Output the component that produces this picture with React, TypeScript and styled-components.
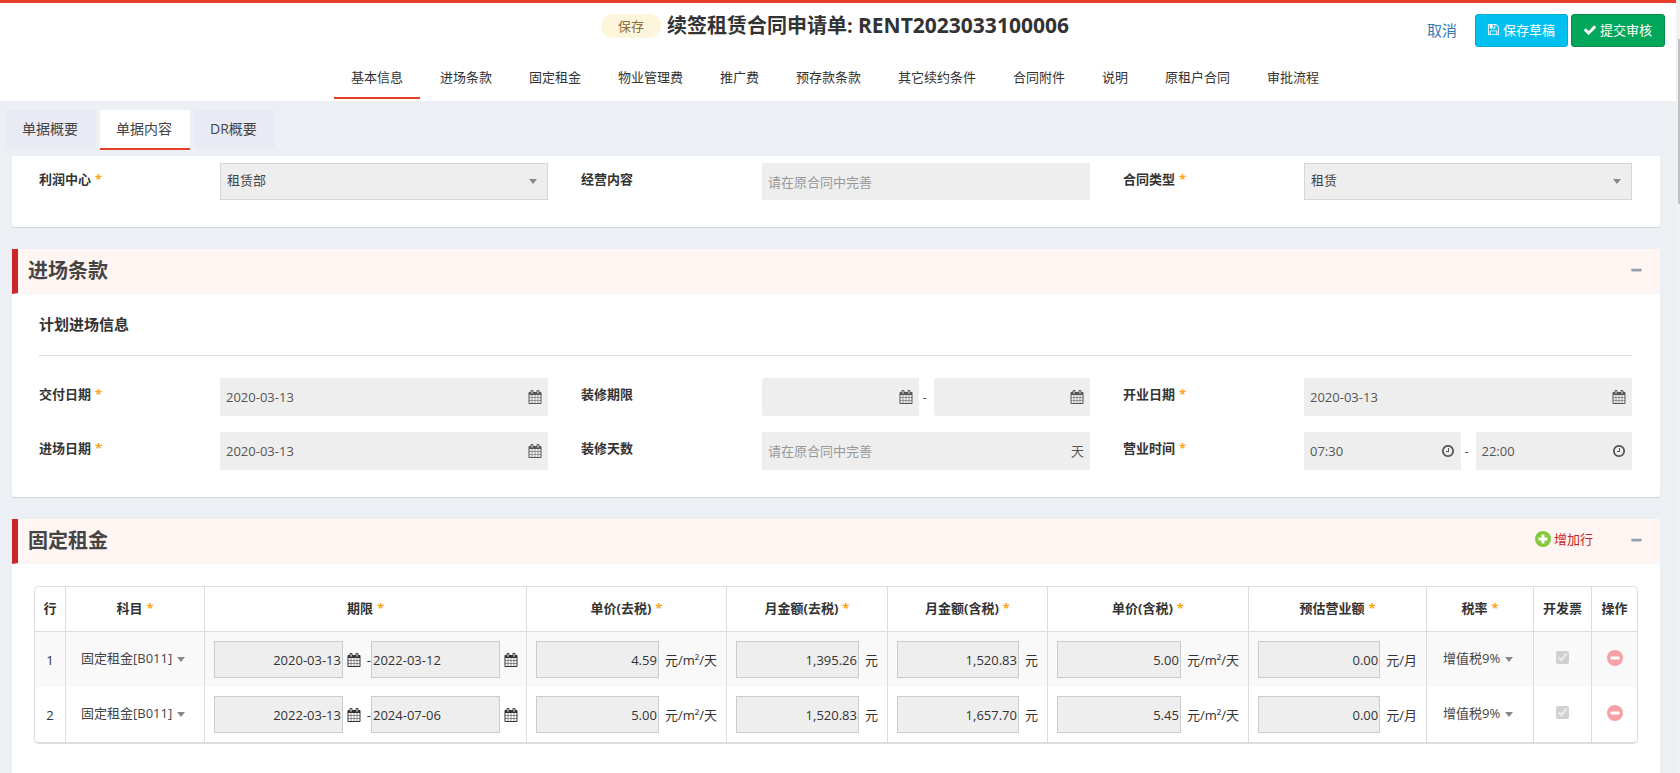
import React from "react";
import styled, { createGlobalStyle, css } from "styled-components";

const FONT = '"Open Sans", "Noto Sans CJK SC", sans-serif';

const GlobalStyle = createGlobalStyle`
  *, *::before, *::after { box-sizing: border-box; }
  html, body { margin: 0; height: 100%; overflow: hidden; }
  body, button, input, select { font-family: ${FONT}; font-size: 13px; }
  body { background: #ecf0f5; color: #333; line-height: 20px; }
`;

/* ---------- icons ---------- */

const ICONS = {
  save: "M512 1536h768v-384h-768v384zm896 0h128v-896q0-14-10-38.5t-20-34.5l-281-281q-10-10-34-20t-39-10v416q0 40-28 68t-68 28h-576q-40 0-68-28t-28-68v-416h-128v1280h128v-416q0-40 28-68t68-28h832q40 0 68 28t28 68v416zm-384-928v-320q0-13-9.5-22.5t-22.5-9.5h-192q-13 0-22.5 9.5t-9.5 22.5v320q0 13 9.5 22.5t22.5 9.5h192q13 0 22.5-9.5t9.5-22.5zm640 32v928q0 40-28 68t-68 28h-1344q-40 0-68-28t-28-68v-1344q0-40 28-68t68-28h928q40 0 88 20t76 48l280 280q28 28 48 76t20 88z",
  check:
    "M1671 566q0 40-28 68l-724 724-136 136q-28 28-68 28t-68-28l-136-136-362-362q-28-28-28-68t28-68l136-136q28-28 68-28t68 28l294 295 656-657q28-28 68-28t68 28l136 136q28 28 28 68z",
  calendar:
    "M192 1664h288v-288h-288v288zm352 0h320v-288h-320v288zm-352-352h288v-320h-288v320zm352 0h320v-320h-320v320zm-352-384h288v-288h-288v288zm736 736h320v-288h-320v288zm-384-736h320v-288h-320v288zm768 736h288v-288h-288v288zm-384-352h320v-320h-320v320zm-352-864v-288q0-13-9.5-22.5t-22.5-9.5h-64q-13 0-22.5 9.5t-9.5 22.5v288q0 13 9.5 22.5t22.5 9.5h64q13 0 22.5-9.5t9.5-22.5zm736 864h288v-320h-288v320zm-384-384h320v-288h-320v288zm384 0h288v-288h-288v288zm32-480v-288q0-13-9.5-22.5t-22.5-9.5h-64q-13 0-22.5 9.5t-9.5 22.5v288q0 13 9.5 22.5t22.5 9.5h64q13 0 22.5-9.5t9.5-22.5zm384-64v1280q0 52-38 90t-90 38h-1408q-52 0-90-38t-38-90v-1280q0-52 38-90t90-38h128v-96q0-66 47-113t113-47h64q66 0 113 47t47 113v96h384v-96q0-66 47-113t113-47h64q66 0 113 47t47 113v96h128q52 0 90 38t38 90z",
  clock:
    "M1024 544v448q0 14-9 23t-23 9h-320q-14 0-23-9t-9-23v-64q0-14 9-23t23-9h224v-352q0-14 9-23t23-9h64q14 0 23 9t9 23zm416 352q0-148-73-273t-198-198-273-73-273 73-198 198-73 273 73 273 198 198 273 73 273-73 198-198 73-273zm224 0q0 209-103 385.5t-279.5 279.5-385.5 103-385.5-103-279.5-279.5-103-385.5 103-385.5 279.5-279.5 385.5-103 385.5 103 279.5 279.5 103 385.5z",
  minus:
    "M1600 736v192q0 40-28 68t-68 28h-1216q-40 0-68-28t-28-68v-192q0-40 28-68t68-28h1216q40 0 68 28t28 68z",
};

const IconSvg = styled.svg`
  display: block;
  flex: none;
  fill: currentColor;
`;

function Icon({ name, size = 14 }: { name: keyof typeof ICONS; size?: number }) {
  return (
    <IconSvg width={size} height={size} viewBox="0 0 1792 1792" aria-hidden="true">
      <path d={ICONS[name]} />
    </IconSvg>
  );
}

function AddIcon() {
  return (
    <IconSvg width="16" height="16" viewBox="0 0 16 16" aria-hidden="true">
      <circle cx="8" cy="8" r="8" fill="#83c93d" />
      <path d="M6.5 3.5h3v3h3v3h-3v3h-3v-3h-3v-3h3z" fill="#fff" />
    </IconSvg>
  );
}

function RemoveIcon() {
  return (
    <IconSvg width="16" height="16" viewBox="0 0 16 16" aria-hidden="true">
      <circle cx="8" cy="8" r="8" fill="#f5a1a5" />
      <rect x="3.5" y="6.5" width="9" height="3" rx="0.5" fill="#fff" />
    </IconSvg>
  );
}

/* ---------- page frame ---------- */

const Page = styled.div`
  display: flex;
  height: 100vh;
  overflow: hidden;
`;

const Content = styled.div`
  flex: 1;
  min-width: 0;
`;

const ScrollRail = styled.div`
  flex: none;
  width: 4px;
  padding: 39px 0 0 2px;
  background: #f1f1f1;
`;

const ScrollThumb = styled.div`
  height: 165px;
  background: #c1c1c1;
`;

const Header = styled.header`
  border-top: 3px solid #e73c27;
  padding-bottom: 2px;
  background: #fff;
`;

const TitleBar = styled.div`
  display: grid;
  grid-template-columns: 1fr auto 1fr;
  align-items: start;
  height: 56px;
`;

const TitleGroup = styled.div`
  grid-column: 2;
  display: flex;
  align-items: center;
  gap: 6px;
  padding: 8px 6px 0 0;
`;

const StatusBadge = styled.span`
  padding: 2px 17px;
  border-radius: 12px;
  background: #fdf6dd;
  color: #8a6d3b;
`;

const DocTitle = styled.h1`
  margin: 0;
  font-size: 20px;
  line-height: 28px;
  color: #333;
`;

const DocNumber = styled.span`
  font-size: 21px;
`;

const Actions = styled.div`
  display: flex;
  align-items: center;
  justify-content: flex-end;
  gap: 3px;
  padding: 11px 11px 0 0;
`;

const CancelLink = styled.a`
  margin-right: 15px;
  padding-bottom: 2px;
  font-size: 15px;
  color: #337ab7;
  text-decoration: none;
`;

const ActionButton = styled.button<{ $tone: "info" | "success" }>`
  display: flex;
  align-items: center;
  gap: 3px;
  height: 33px;
  padding: 0 12px 2px 11px;
  border: 1px solid ${(p) => (p.$tone === "info" ? "#00acd6" : "#008d4c")};
  border-radius: 3px;
  background: ${(p) => (p.$tone === "info" ? "#00c0ef" : "#00a65a")};
  color: #fff;
`;

const SectionNav = styled.nav`
  display: flex;
  justify-content: center;
  gap: 3px;
  padding-right: 6px;
`;

const NavLink = styled.a<{ $active: boolean }>`
  padding: 8px 17px 10px;
  border-bottom: 2px solid ${(p) => (p.$active ? "#e73c27" : "transparent")};
  color: #333;
  text-decoration: none;
  white-space: nowrap;
`;

const Main = styled.main`
  padding: 9px 16px 0 12px;
`;

const DocTabs = styled.div`
  display: flex;
  align-items: flex-start;
  gap: 4px;
  height: 40px;
  margin: 0 0 6px -6px;
`;

const DocTab = styled.button<{ $active: boolean }>`
  height: 38px;
  padding: 0 18px 0 16px;
  border: 0;
  background: #eaeaf4;
  color: #444;
  font-size: 14px;
  line-height: 20px;
  ${(p) =>
    p.$active &&
    css`
      height: 40px;
      border-bottom: 2px solid #e73c27;
      background: #fff;
    `}
`;

/* ---------- cards ---------- */

const Card = styled.section`
  margin-bottom: 22px;
  border-radius: 0 0 3px 3px;
  background: #fff;
  box-shadow: 0 1px 1px rgba(0, 0, 0, 0.12);
`;

const CardHeader = styled.div`
  display: flex;
  align-items: center;
  height: 45px;
  padding: 0 17px 1px 10px;
  border-left: 6px solid #c9282b;
  border-bottom: 1px solid #f4f4f4;
  background: #fff5f3;
`;

const CardTitle = styled.h2`
  margin: 0 auto 0 0;
  font-size: 20px;
  line-height: 28px;
  color: #444;
`;

const AddRowButton = styled.button`
  display: flex;
  align-items: center;
  gap: 3px;
  margin-right: 37px;
  padding: 0 0 4px;
  border: 0;
  background: none;
  color: #c4251e;
`;

const CollapseButton = styled.button`
  padding: 0;
  border: 0;
  background: none;
  color: #97a0b3;
`;

const FormBody = styled.div<{ $top: number }>`
  padding: ${(p) => p.$top}px 28px 27px 27px;
`;

const SubHeading = styled.h3`
  margin: 0 0 22px;
  padding-bottom: 21px;
  border-bottom: 1px solid #ddd;
  font-size: 15px;
  line-height: 20px;
`;

const FieldGrid = styled.div`
  display: grid;
  grid-template-columns: repeat(3, minmax(0, 1fr));
  gap: 16px 33px;
`;

const FieldRow = styled.div`
  display: flex;
  align-items: flex-start;
`;

const FieldLabel = styled.label`
  flex: none;
  width: 181px;
  padding-top: 6px;
  font-weight: 700;
`;

const Star = styled.span`
  margin-left: 4px;
  color: #ffa31a;
  font-weight: 700;
`;

const RangeBox = styled.div`
  display: flex;
  flex: 1;
  min-width: 0;
  align-items: center;
`;

const Dash = styled.span`
  flex: none;
  width: 15px;
  padding-left: 4px;
  color: #555;
`;

const InputShell = styled.div<{ $height?: number; $rounded?: boolean }>`
  display: flex;
  flex: 1;
  min-width: 0;
  align-items: center;
  height: ${(p) => p.$height ?? 38}px;
  padding: 0 6px;
  border-radius: ${(p) => (p.$rounded ? "3px 0 0 3px" : "0")};
  background: #eee;
  color: #555;
`;

const TextInput = styled.input`
  flex: 1;
  min-width: 0;
  height: 100%;
  padding: 0;
  border: 0;
  background: none;
  color: #555;
  &::placeholder {
    color: #999;
    opacity: 1;
  }
`;

const SelectBox = styled.div`
  display: grid;
  flex: 1;
  min-width: 0;
  align-items: center;
`;

const SelectInput = styled.select`
  grid-area: 1 / 1;
  width: 100%;
  height: 37px;
  padding: 0 24px 3px 6px;
  border: 1px solid #d2d6de;
  border-radius: 0;
  appearance: none;
  background: #eee;
  color: #444;
  &:disabled {
    opacity: 1;
  }
`;

const Caret = styled.span<{ $inset?: number }>`
  grid-area: 1 / 1;
  justify-self: end;
  margin-right: ${(p) => p.$inset ?? 0}px;
  border: 4px solid transparent;
  border-top: 5px solid #888;
  border-bottom: 0;
  pointer-events: none;
`;

/* ---------- rent table ---------- */

const TableBody = styled.div`
  padding: 22px 22px 60px;
`;

const RentTable = styled.table`
  width: 100%;
  table-layout: fixed;
  border: 1px solid #ddd;
  border-bottom-width: 2px;
  border-radius: 5px;
  border-spacing: 0;
  border-collapse: separate;
  overflow: hidden;
`;

const Th = styled.th`
  height: 45px;
  padding: 0 0 2px;
  border-bottom: 1px solid #ddd;
  & + & {
    border-left: 1px solid #ddd;
  }
`;

const Td = styled.td`
  height: 55px;
  padding: 0;
  text-align: center;
  & + & {
    border-left: 1px solid #ddd;
  }
`;

const BodyRow = styled.tr`
  &:nth-child(odd) {
    background: #f9f9f9;
  }
`;

const CellFlow = styled.div`
  display: flex;
  align-items: center;
  gap: 6px;
  padding: 0 9px;
`;

const DateFlow = styled(CellFlow)`
  gap: 0;
  padding-right: 4px;
`;

const IconSlot = styled.span`
  display: flex;
  padding: 0 4px;
`;

const DateDash = styled.span`
  width: 6px;
  text-align: right;
`;

const CellInput = styled.input<{ $align?: "left" | "right" }>`
  flex: 1;
  width: 0;
  min-width: 0;
  height: 37px;
  padding: 0 1px;
  border: 1px solid #ccc;
  background: #eee;
  color: #333;
  text-align: ${(p) => p.$align ?? "right"};
`;

const Unit = styled.span`
  flex: none;
  white-space: nowrap;
`;

const CellSelectBox = styled.div`
  display: inline-grid;
  align-items: center;
  margin-right: 4px;
`;

const CellSelect = styled.select`
  grid-area: 1 / 1;
  height: 24px;
  padding: 0 12px 0 0;
  border: 0;
  appearance: none;
  background: none;
  color: #444;
  &:disabled {
    opacity: 1;
  }
`;

const CellCaret = styled(Caret)`
  margin-top: 3px;
`;

const RaisedCell = styled.div`
  display: flex;
  justify-content: center;
  padding-bottom: 4px;
`;

const InvoiceCheck = styled.input`
  width: 13px;
  height: 13px;
  margin: 0;
`;

const RemoveButton = styled.button`
  padding: 0;
  border: 0;
  background: none;
`;

/* ---------- data ---------- */

const NAV = ["基本信息", "进场条款", "固定租金", "物业管理费", "推广费", "预存款条款", "其它续约条件", "合同附件", "说明", "原租户合同", "审批流程"];
const TABS = ["单据概要", "单据内容", "DR概要"];

const COLUMNS = [
  { title: "行", width: 30 },
  { title: "科目", width: 139, required: true },
  { title: "期限", width: 322, required: true },
  { title: "单价(去税)", width: 200, required: true },
  { title: "月金额(去税)", width: 161, required: true },
  { title: "月金额(含税)", width: 160, required: true },
  { title: "单价(含税)", width: 201, required: true },
  { title: "预估营业额", width: 178, required: true },
  { title: "税率", width: 107, required: true },
  { title: "开发票", width: 58 },
  { title: "操作", width: 46 },
];

const ROWS = [
  { from: "2020-03-13", to: "2022-03-12", amounts: ["4.59", "1,395.26", "1,520.83", "5.00", "0.00"] },
  { from: "2022-03-13", to: "2024-07-06", amounts: ["5.00", "1,520.83", "1,657.70", "5.45", "0.00"] },
];

const UNITS = ["元/m²/天", "元", "元", "元/m²/天", "元/月"];

/* ---------- composed parts ---------- */

function Label({ id, text, required }: { id: string; text: string; required?: boolean }) {
  return (
    <FieldLabel htmlFor={id}>
      {text}
      {required && <Star>*</Star>}
    </FieldLabel>
  );
}

function SelectField({ id, label, value }: { id: string; label: string; value: string }) {
  return (
    <FieldRow>
      <Label id={id} text={label} required />
      <SelectBox>
        <SelectInput id={id} disabled>
          <option>{value}</option>
        </SelectInput>
        <Caret $inset={11} />
      </SelectBox>
    </FieldRow>
  );
}

function DateField({ id, label, value }: { id: string; label: string; value: string }) {
  return (
    <FieldRow>
      <Label id={id} text={label} required />
      <InputShell>
        <TextInput id={id} defaultValue={value} readOnly />
        <Icon name="calendar" />
      </InputShell>
    </FieldRow>
  );
}

function RangeField(props: {
  id: string;
  label: string;
  required?: boolean;
  icon: "calendar" | "clock";
  values: [string, string];
  rounded?: boolean;
}) {
  const { id, label, required, icon, values, rounded } = props;
  return (
    <FieldRow>
      <Label id={id} text={label} required={required} />
      <RangeBox>
        <InputShell $rounded={rounded}>
          <TextInput id={id} defaultValue={values[0]} readOnly />
          <Icon name={icon} />
        </InputShell>
        <Dash>-</Dash>
        <InputShell $rounded={rounded}>
          <TextInput aria-label={`${label} 至`} defaultValue={values[1]} readOnly />
          <Icon name={icon} />
        </InputShell>
      </RangeBox>
    </FieldRow>
  );
}

function InlineSelect({ label, value }: { label: string; value: string }) {
  return (
    <RaisedCell>
      <CellSelectBox>
        <CellSelect aria-label={label} disabled>
          <option>{value}</option>
        </CellSelect>
        <CellCaret />
      </CellSelectBox>
    </RaisedCell>
  );
}

function CollapseToggle() {
  return (
    <CollapseButton type="button" aria-label="收起">
      <Icon name="minus" size={13} />
    </CollapseButton>
  );
}

export default function App() {
  return (
    <>
      <GlobalStyle />
      <Page>
        <Content>
          <Header>
            <TitleBar>
              <TitleGroup>
                <StatusBadge>保存</StatusBadge>
                <DocTitle>
                  续签租赁合同申请单: <DocNumber>RENT2023033100006</DocNumber>
                </DocTitle>
              </TitleGroup>
              <Actions>
                <CancelLink href="#">取消</CancelLink>
                <ActionButton type="button" $tone="info">
                  <Icon name="save" size={13} />
                  保存草稿
                </ActionButton>
                <ActionButton type="button" $tone="success">
                  <Icon name="check" />
                  提交审核
                </ActionButton>
              </Actions>
            </TitleBar>
            <SectionNav>
              {NAV.map((item, i) => (
                <NavLink key={item} href="#" $active={i === 0}>
                  {item}
                </NavLink>
              ))}
            </SectionNav>
          </Header>

          <Main>
            <DocTabs>
              {TABS.map((tab, i) => (
                <DocTab key={tab} type="button" $active={i === 1}>
                  {tab}
                </DocTab>
              ))}
            </DocTabs>

            <Card>
              <FormBody $top={7}>
                <FieldGrid>
                  <SelectField id="profit-center" label="利润中心" value="租赁部" />
                  <FieldRow>
                    <Label id="business" text="经营内容" />
                    <InputShell $height={37}>
                      <TextInput id="business" placeholder="请在原合同中完善" readOnly />
                    </InputShell>
                  </FieldRow>
                  <SelectField id="contract-type" label="合同类型" value="租赁" />
                </FieldGrid>
              </FormBody>
            </Card>

            <Card>
              <CardHeader>
                <CardTitle>进场条款</CardTitle>
                <CollapseToggle />
              </CardHeader>
              <FormBody $top={20}>
                <SubHeading>计划进场信息</SubHeading>
                <FieldGrid>
                  <DateField id="delivery" label="交付日期" value="2020-03-13" />
                  <RangeField id="fitout" label="装修期限" icon="calendar" values={["", ""]} rounded />
                  <DateField id="opening" label="开业日期" value="2020-03-13" />
                  <DateField id="entry" label="进场日期" value="2020-03-13" />
                  <FieldRow>
                    <Label id="fitout-days" text="装修天数" />
                    <InputShell>
                      <TextInput id="fitout-days" placeholder="请在原合同中完善" readOnly />
                      天
                    </InputShell>
                  </FieldRow>
                  <RangeField id="hours" label="营业时间" required icon="clock" values={["07:30", "22:00"]} />
                </FieldGrid>
              </FormBody>
            </Card>

            <Card>
              <CardHeader>
                <CardTitle>固定租金</CardTitle>
                <AddRowButton type="button">
                  <AddIcon />
                  增加行
                </AddRowButton>
                <CollapseToggle />
              </CardHeader>
              <TableBody>
                <RentTable>
                  <colgroup>
                    {COLUMNS.map((c) => (
                      <col key={c.title} width={c.width} />
                    ))}
                  </colgroup>
                  <thead>
                    <tr>
                      {COLUMNS.map((c) => (
                        <Th key={c.title} scope="col">
                          {c.title}
                          {c.required && <Star>*</Star>}
                        </Th>
                      ))}
                    </tr>
                  </thead>
                  <tbody>
                    {ROWS.map((row, i) => (
                      <BodyRow key={row.from}>
                        <Td>{i + 1}</Td>
                        <Td>
                          <InlineSelect label="科目" value="固定租金[B011]" />
                        </Td>
                        <Td>
                          <DateFlow>
                            <CellInput aria-label="开始日期" defaultValue={row.from} readOnly />
                            <IconSlot>
                              <Icon name="calendar" />
                            </IconSlot>
                            <DateDash>-</DateDash>
                            <CellInput aria-label="结束日期" defaultValue={row.to} readOnly $align="left" />
                            <IconSlot>
                              <Icon name="calendar" />
                            </IconSlot>
                          </DateFlow>
                        </Td>
                        {row.amounts.map((amount, k) => (
                          <Td key={k}>
                            <CellFlow>
                              <CellInput aria-label={COLUMNS[k + 3].title} defaultValue={amount} readOnly />
                              <Unit>{UNITS[k]}</Unit>
                            </CellFlow>
                          </Td>
                        ))}
                        <Td>
                          <InlineSelect label="税率" value="增值税9%" />
                        </Td>
                        <Td>
                          <RaisedCell>
                            <InvoiceCheck type="checkbox" aria-label="开发票" defaultChecked disabled />
                          </RaisedCell>
                        </Td>
                        <Td>
                          <RaisedCell>
                            <RemoveButton type="button" aria-label="删除行">
                              <RemoveIcon />
                            </RemoveButton>
                          </RaisedCell>
                        </Td>
                      </BodyRow>
                    ))}
                  </tbody>
                </RentTable>
              </TableBody>
            </Card>
          </Main>
        </Content>
        <ScrollRail>
          <ScrollThumb />
        </ScrollRail>
      </Page>
    </>
  );
}
